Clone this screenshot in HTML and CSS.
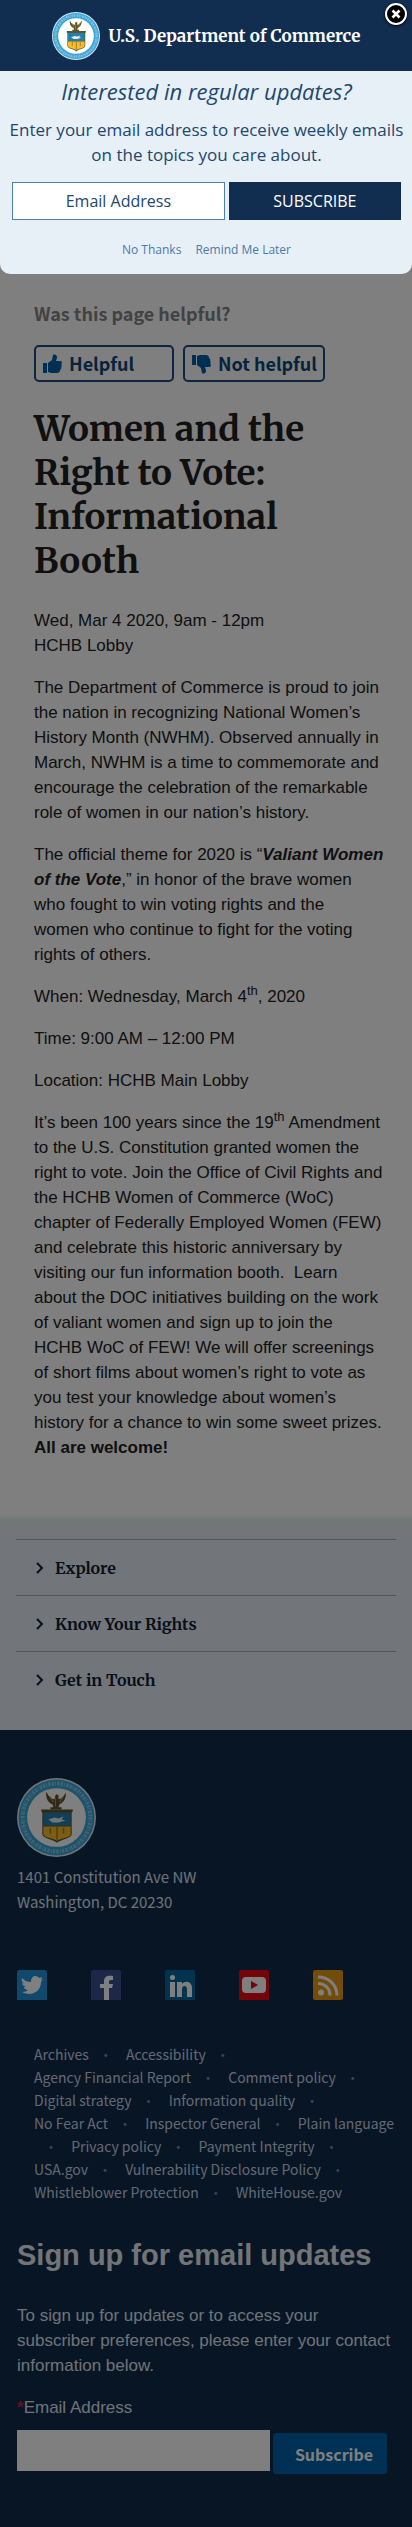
FILE: index.html
```html
<!DOCTYPE html>
<html lang="en">
<head>
<meta charset="utf-8">
<meta name="viewport" content="width=device-width, initial-scale=1">
<title>Women and the Right to Vote: Informational Booth</title>
<link rel="stylesheet" href="styles.css">
</head>
<body>
<svg class="defs" aria-hidden="true">
  <symbol id="seal" viewBox="0 0 78 78">
    <circle cx="39" cy="39" r="39" fill="#dce9f2"/>
    <circle cx="39" cy="39" r="37.5" fill="#3ba4d6"/>
    <circle cx="39" cy="39" r="29" fill="#fff"/>
    <circle cx="39" cy="39" r="33.5" fill="none" stroke="#d4edf7" stroke-width="4" stroke-dasharray="2 1 1 1.4 2.4 1.2" opacity=".45"/>
    <path d="M29 13c1 4 4 7 8 8l1-4 1-1 2 1v4c4-1 6-4 7-7 1 6-2 10-6 12l-1 3h3v2H33v-2h3l-1-3c-5-2-7-7-6-13z" fill="#5f5128"/>
    <path d="M32 18l4 6M46 18l-4 6M38 20v8" stroke="#b49a4a" fill="none"/>
    <path d="M24 31h31v2l-1 1v21c0 5-10 5-14.500 9C35 60 25 60 25 55V34l-1-1z" fill="#5c5527"/>
    <path d="M26 34h27v13H26z" fill="#247fae"/>
    <path d="M26 48h27v7c0 4-9 4-13.500 7C35 59 26 59 26 55z" fill="#f5bd2b"/>
    <path d="M31 41l6-2 4 1 5-2-2 3 4 1-7 2h-6z" fill="#e5edf0"/>
    <path d="M39.500 48v13M33 49v6M46 49v6" stroke="#a57b1d" stroke-width="1.500"/>
  </symbol>
  <symbol id="thumb" viewBox="0 0 20 20">
    <path d="M1 9h4v10H1z"/>
    <path d="M6 9l4-3 1-5c0-1 4-1 4 2 0 2-1 3-1 4h4c3 0 2 3 1 3 1 1 1 2 0 3 1 1 0 2-1 3 0 2-1 3-3 3H9l-3-1z"/>
  </symbol>
  <symbol id="chevron" viewBox="0 0 8 12">
    <path d="M1 1l5 5-5 5" fill="none" stroke="currentColor" stroke-width="2"/>
  </symbol>
</svg>

<main class="article">
  <section class="feedback">
    <h2 class="feedback-title">Was this page helpful?</h2>
    <div class="feedback-buttons">
      <button class="vote" type="button"><svg class="vote-icon"><use href="#thumb"/></svg>Helpful</button>
      <button class="vote" type="button"><svg class="vote-icon vote-icon-down"><use href="#thumb"/></svg>Not helpful</button>
    </div>
  </section>
  <h1 class="title">Women and the Right to Vote: Informational Booth</h1>
  <p>Wed, Mar 4 2020, 9am - 12pm<br>HCHB Lobby</p>
  <p>The Department of Commerce is proud to join the nation in recognizing National Women’s History Month (NWHM). Observed annually in March, NWHM is a time to commemorate and encourage the celebration of the remarkable role of women in our nation’s history.</p>
  <p>The official theme for 2020 is “<strong><em>Valiant Women of the Vote</em></strong>,” in honor of the brave women who fought to win voting rights and the women&nbsp;who continue to fight for the voting rights of others.</p>
  <p>When: Wednesday, March 4<sup>th</sup>, 2020</p>
  <p>Time: 9:00 AM – 12:00 PM</p>
  <p>Location: HCHB Main Lobby</p>
  <p>It’s been 100 years since the 19<sup>th</sup> Amendment to the U.S. Constitution granted women the right to vote. Join the Office of Civil Rights and the HCHB Women of Commerce (WoC) chapter of Federally Employed Women (FEW) and celebrate this historic anniversary by visiting our fun information booth.&nbsp; Learn about&nbsp;the DOC initiatives building on the work of valiant women and sign up to join the HCHB&nbsp;WoC of FEW! We will offer screenings of short films about women’s right to vote as you test your knowledge about women’s history for a chance to win some sweet prizes. <strong>All are welcome!</strong></p>
</main>

<nav class="sections">
  <button class="section-toggle" type="button"><svg class="chevron"><use href="#chevron"/></svg>Explore</button>
  <button class="section-toggle" type="button"><svg class="chevron"><use href="#chevron"/></svg>Know Your Rights</button>
  <button class="section-toggle" type="button"><svg class="chevron"><use href="#chevron"/></svg>Get in Touch</button>
</nav>

<footer class="footer">
  <svg class="footer-seal" role="img" aria-label="Department of Commerce seal"><use href="#seal"/></svg>
  <address class="address">1401 Constitution Ave NW<br>Washington, DC 20230</address>
  <div class="social">
    <a href="#" aria-label="Twitter"><svg viewBox="0 0 30 30"><rect width="30" height="32" rx="2" fill="#2093d8"/><path d="M5 8c3 3 6 4 9 4 0-7 6-7 8-4l3-1-1 3 2-1-2 3c0 10-10 15-19 10 3 0 5-1 6-2-2 0-4-1-4-3h2c-3-1-4-3-4-4l2 .500C5 12 4 10 5 8z" fill="#fff"/></svg></a>
    <a href="#" aria-label="Facebook"><svg viewBox="0 0 30 30"><rect width="30" height="32" rx="2" fill="#3d4e91"/><path d="M13 30V18H9v-4h4v-3c0-4 3-6 9-5v4c-3 0-4 0-4 2v2h4l-1 4h-3v12z" fill="#fff"/></svg></a>
    <a href="#" aria-label="LinkedIn"><svg viewBox="0 0 30 30"><rect width="30" height="32" rx="2" fill="#07699f"/><circle cx="7.500" cy="7.500" r="2.500" fill="#fff"/><path d="M5 12h5v15H5zM12 12h5v2c3-4 10-3 10 4v9h-5v-8c0-4-5-4-5 0v8h-5z" fill="#fff"/></svg></a>
    <a href="#" aria-label="YouTube"><svg viewBox="0 0 30 30"><rect width="30" height="32" rx="2" fill="#e50914"/><rect x="3" y="7" width="24" height="16" rx="4" fill="#fff"/><path d="M12 11l7 4-7 4z" fill="#e50914"/></svg></a>
    <a href="#" aria-label="RSS"><svg viewBox="0 0 30 30"><rect width="30" height="30" rx="2" fill="#e39b13"/><circle cx="8" cy="22.500" r="3" fill="#fff"/><path d="M5 13.500c7 0 12 5 12 12M5 7c11 0 19 8 19 18.500" fill="none" stroke="#fff" stroke-width="3"/></svg></a>
  </div>
  <ul class="links">
    <li><a href="#">Archives</a></li>
    <li><a href="#">Accessibility</a></li>
    <li><a href="#">Agency Financial Report</a></li>
    <li><a href="#">Comment policy</a></li>
    <li><a href="#">Digital strategy</a></li>
    <li><a href="#">Information quality</a></li>
    <li><a href="#">No Fear Act</a></li>
    <li><a href="#">Inspector General</a></li>
    <li><a href="#">Plain language</a></li>
    <li><a href="#">Privacy policy</a></li>
    <li><a href="#">Payment Integrity</a></li>
    <li><a href="#">USA.gov</a></li>
    <li><a href="#">Vulnerability Disclosure Policy</a></li>
    <li><a href="#">Whistleblower Protection</a></li>
    <li><a href="#">WhiteHouse.gov</a></li>
  </ul>
  <form class="signup">
    <h2 class="signup-title">Sign up for email updates</h2>
    <p class="signup-text">To sign up for updates or to access your subscriber preferences, please enter your contact information below.</p>
    <label class="signup-label" for="signup-email"><span class="required">*</span>Email Address</label>
    <div class="signup-row">
      <input class="signup-input" id="signup-email" type="email">
      <button class="signup-button" type="button">Subscribe</button>
    </div>
  </form>
</footer>

<div class="overlay"></div>

<div class="dialog" role="dialog" aria-labelledby="dialog-title">
  <header class="banner">
    <svg class="banner-seal" aria-hidden="true"><use href="#seal"/></svg>
    <span class="banner-name">U.S. Department of Commerce</span>
  </header>
  <form class="dialog-body">
    <h2 class="dialog-title" id="dialog-title">Interested in regular updates?</h2>
    <p class="dialog-text">Enter your email address to receive weekly emails on the topics you care about.</p>
    <div class="dialog-row">
      <input class="dialog-input" type="email" placeholder="Email Address" aria-label="Email Address">
      <button class="dialog-submit" type="button">SUBSCRIBE</button>
    </div>
    <div class="dialog-links">
      <a href="#">No Thanks</a>
      <a href="#">Remind Me Later</a>
    </div>
  </form>
  <button class="close" type="button" aria-label="Close"><svg viewBox="0 0 10 10"><path d="M1.500 1.500l7 7M8.500 1.500l-7 7" stroke="#fff" stroke-width="2.600"/></svg></button>
</div>
</body>
</html>
```
FILE: styles.css
```css
* {
  box-sizing: border-box;
}

body {
  position: relative;
  margin: 0;
  background: #fff;
  color: #212121;
  font: 17px/25px "Liberation Sans", Arial, sans-serif;
}

button,
input {
  margin: 0;
  border: 0;
  border-radius: 0;
  font: inherit;
}

p {
  margin: 0 0 17px;
}

sup {
  font-size: 13px;
  line-height: 0;
}

.defs {
  display: none;
}

.article {
  padding: 301px 26px 37px 34px;
}

.feedback-title {
  margin: 0 0 19px;
  color: #848484;
  font: bold 18px/25px "Source Sans Pro", "Noto Sans CJK SC", sans-serif;
}

.feedback-buttons {
  display: flex;
  gap: 9px;
}

.vote {
  display: flex;
  align-items: center;
  gap: 7px;
  min-width: 140px;
  height: 37px;
  padding: 0 6px;
  border: 2px solid #1b4a80;
  border-radius: 5px;
  background: none;
  color: #0b4778;
  font: bold 18px/25px "Source Sans Pro", "Noto Sans CJK SC", sans-serif;
  white-space: nowrap;
}

.vote-icon {
  width: 20px;
  height: 20px;
  fill: #005ea8;
}

.vote-icon-down {
  transform: scaleY(-1);
}

.title {
  margin: 25px 26px 25px 0;
  font: bold 35px/44px Merriweather, "DejaVu Serif Condensed", serif;
}

.sections {
  padding: 25px 16px 23px;
  background: linear-gradient(#fff, #d4f0e4 8px, #e4ecf7 8px);
}

.section-toggle {
  display: flex;
  align-items: center;
  gap: 11px;
  width: 100%;
  height: 56px;
  padding: 0 20px;
  border-top: 1px solid #a2a8b2;
  background: none;
  color: #112030;
  font: bold 16px/24px Merriweather, "DejaVu Serif Condensed", serif;
}

.chevron {
  width: 8px;
  height: 12px;
}

.footer {
  padding: 48px 17px 53px;
  background: #112a4a;
  color: #fff;
}

.footer-seal {
  display: block;
  width: 79px;
  height: 79px;
  margin-bottom: 7px;
}

.address {
  color: #dce4ef;
  font: normal 15px/25px "Source Sans Pro", "Noto Sans CJK SC", sans-serif;
}

.social {
  display: flex;
  gap: 44px;
  margin: 56px 0 43px;
}

.social svg {
  display: block;
  width: 30px;
  height: 30px;
}

.links {
  margin: 0;
  padding: 0 0 0 17px;
  list-style: none;
  color: #7189a6;
  font: 14px/23px "Source Sans Pro", "Noto Sans CJK SC", sans-serif;
}

.links li {
  display: inline;
}

.links li:not(:last-child)::after {
  content: "•";
  display: inline-block;
  width: 34px;
  text-align: center;
}

.links a {
  color: #c6d2e2;
  text-decoration: none;
  white-space: nowrap;
}

.signup-title {
  margin: 34px 0 31px;
  font-size: 29px;
  line-height: 34px;
  color: #e4e8ee;
}

.signup-text,
.signup-label {
  color: #dfe4ec;
}

.signup-label {
  display: block;
}

.required {
  color: #cf2040;
  font-weight: bold;
}

.signup-row {
  display: flex;
  align-items: flex-end;
  gap: 3px;
  margin-top: 10px;
  padding-right: 8px;
}

.signup-input {
  flex: 1;
  min-width: 0;
  height: 41px;
  margin-bottom: 3px;
  background: #fff;
}

.signup-button {
  width: 114px;
  height: 41px;
  padding: 0 0 0 8px;
  border-radius: 3px;
  background: #0061a8;
  color: #fff;
  font: bold 16px/24px "Source Sans Pro", "Noto Sans CJK SC", sans-serif;
}

.overlay {
  position: absolute;
  inset: 0;
  background: rgba(0, 0, 0, 0.5);
}

.dialog {
  position: absolute;
  top: 0;
  left: 0;
  right: 0;
  border-radius: 0 0 10px 10px;
  background: #e8f0f7;
  color: #21476f;
  font: 17px/25px "Open Sans", sans-serif;
  text-align: center;
}

.banner {
  display: flex;
  align-items: center;
  justify-content: center;
  gap: 9px;
  height: 71px;
  background: #112e51;
  color: #fff;
}

.banner-seal {
  width: 48px;
  height: 48px;
}

.banner-name {
  font: bold 17px/24px Merriweather, "DejaVu Serif Condensed", serif;
}

.dialog-body {
  padding: 5px 11px 12px 12px;
}

.dialog-title {
  margin: 0 0 11px;
  font-size: 22px;
  line-height: 30px;
  font-style: italic;
  font-weight: 400;
}

.dialog-text {
  margin: 0 -6px 15px;
}

.dialog-row {
  display: flex;
  gap: 4px;
  font-size: 16px;
}

.dialog-input {
  flex: 6 1 0;
  min-width: 0;
  height: 38px;
  border: 1px solid #4a80b5;
  background: #fff;
  text-align: center;
}

.dialog-input::placeholder {
  color: #21476f;
  opacity: 1;
}

.dialog-submit {
  flex: 5 1 0;
  height: 38px;
  padding: 0;
  background: #112e51;
  color: #fff;
}

.dialog-links {
  display: flex;
  justify-content: center;
  gap: 14px;
  margin-top: 17px;
  font-size: 12px;
}

.dialog-links a {
  color: #4a7aac;
  text-decoration: none;
}

.close {
  position: absolute;
  top: 3px;
  right: 5px;
  display: grid;
  place-items: center;
  width: 22px;
  height: 22px;
  padding: 0;
  border: 2px solid #fff;
  border-radius: 50%;
  background: #000;
  box-shadow: 0 1px 3px #000;
}

.close svg {
  width: 10px;
  height: 10px;
}
```
